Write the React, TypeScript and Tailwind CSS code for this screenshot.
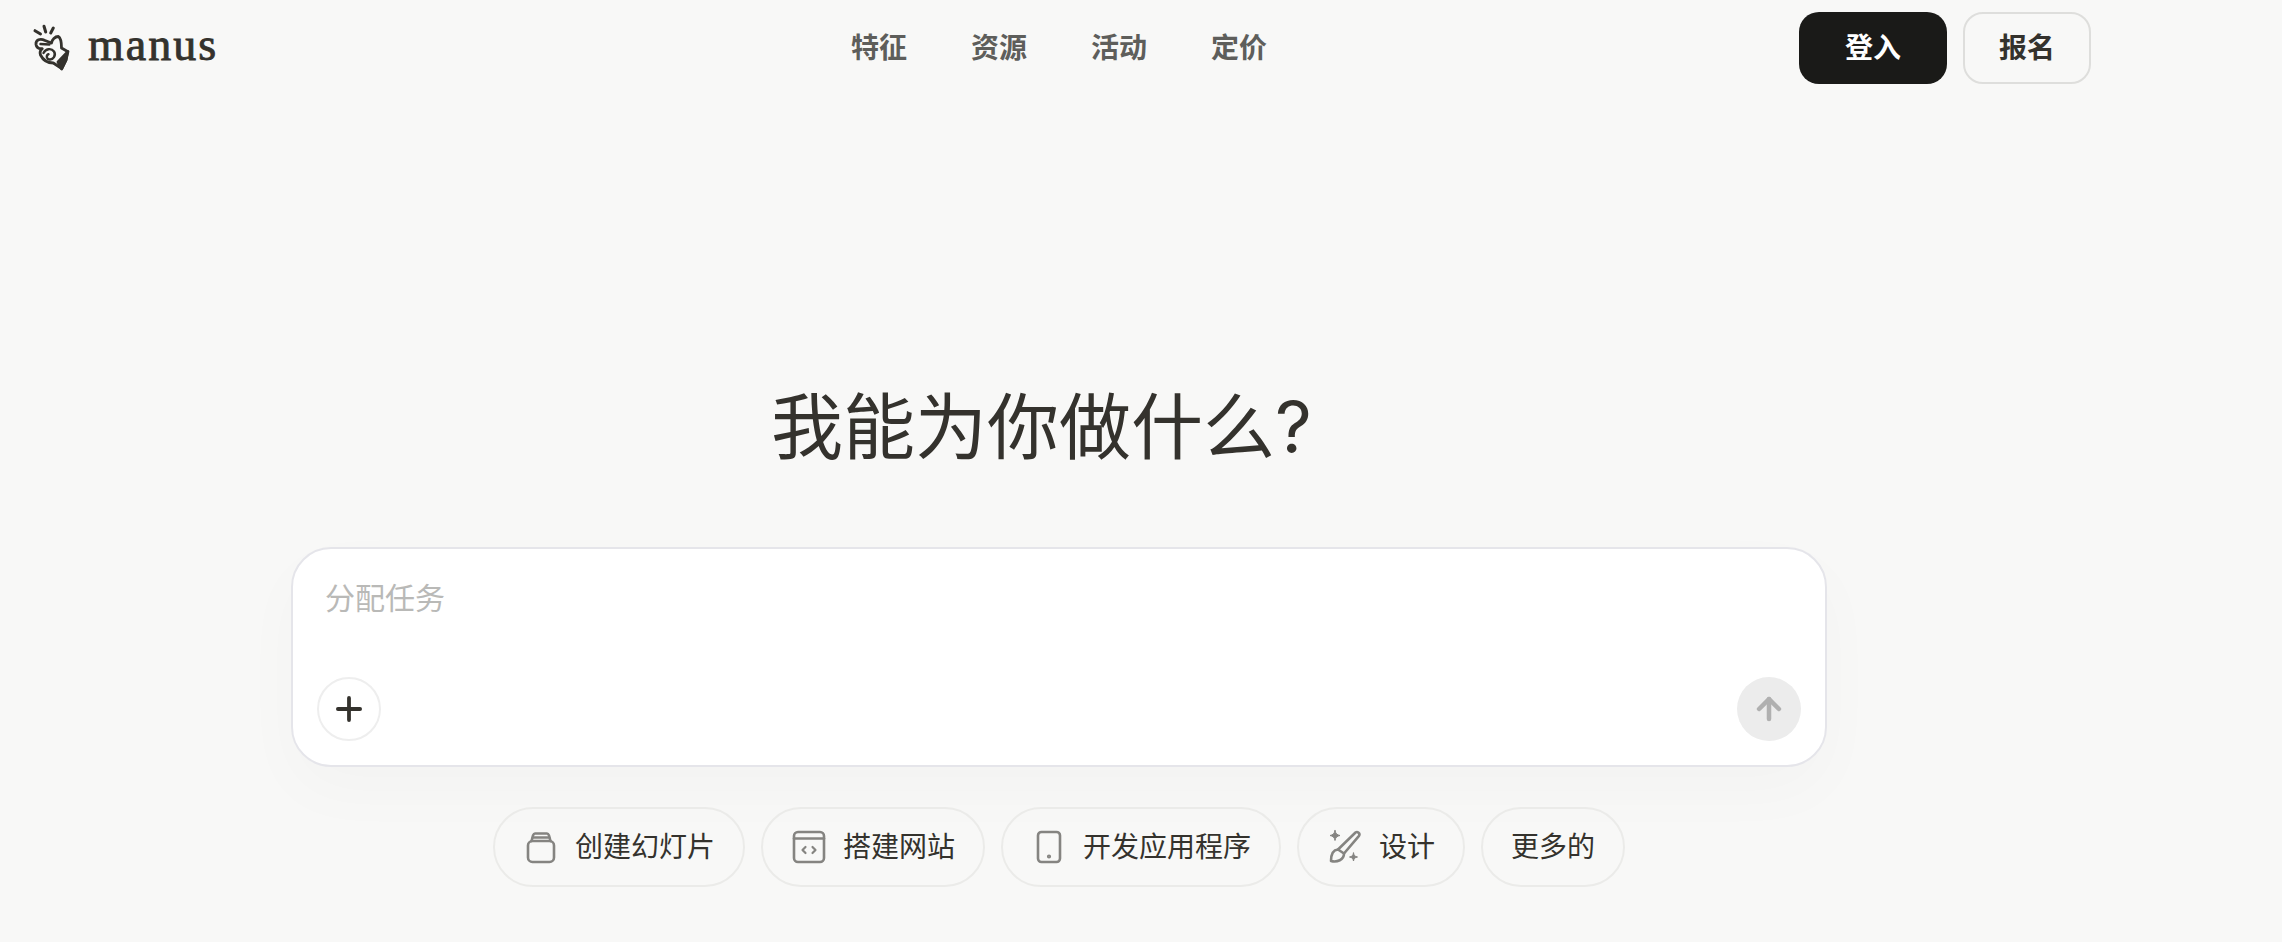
import { ArrowUp, Plus } from "lucide-react"
import type { ReactNode } from "react"

const navItems = ["特征", "资源", "活动", "定价"]

function ManusLogo() {
  return (
    <svg width="40" height="50" viewBox="30 22 40 50" fill="none" stroke="#34322d" strokeWidth="2.800" strokeLinecap="round" strokeLinejoin="round">
      <path d="M35 30.700L40.500 34" strokeWidth="3" />
      <path d="M44 26.300L45.700 32" strokeWidth="3" />
      <path d="M53.300 28L50.700 33" strokeWidth="3" />
      <path d="M36 44.500C35.500 40 40 37.800 45 40.500L51.500 43C52 39.500 55 36.500 58.300 36.500C61 38 61.500 43 61.500 48L67.500 51.500L66 60L61.700 68.500L53.300 63C48 63 43 60 40.500 55C39.500 52 40.500 50 42.300 48.700C39 49 36.500 47.500 36 44.500Z" />
      <path d="M43.500 53C45.500 49 51 47.500 54 51.500C56.500 55.500 53 60 49.500 59.500C46.500 59 45.800 55.500 48.500 54.200" strokeWidth="2.400" />
      <path d="M40.500 44L49.500 44.500" strokeWidth="2.400" />
      <path d="M58 62L68 51.500L66 60L61.700 69Z" fill="#34322d" />
    </svg>
  )
}

function StackIcon() {
  return (
    <svg width="36" height="36" viewBox="0 0 36 36" fill="none" stroke="#858481" strokeWidth="2.600" strokeLinecap="round" strokeLinejoin="round">
      <rect x="5" y="12" width="26" height="21" rx="4.500" />
      <path d="M8.500 12L10 6.500C10.400 5.500 11 4.500 12 4.500H24C25 4.500 25.600 5.500 26 6.500L27.500 12" />
      <path d="M10 8.500H26" />
    </svg>
  )
}

function WebIcon() {
  return (
    <svg width="36" height="36" viewBox="0 0 36 36" fill="none" stroke="#858481" strokeWidth="2.600" strokeLinecap="round" strokeLinejoin="round">
      <rect x="3" y="3" width="30" height="30" rx="4" />
      <path d="M3 9.500H33" />
      <path d="M14.500 18L11.500 21L14.500 24" strokeWidth="2.200" />
      <path d="M21.500 18L24.500 21L21.500 24" strokeWidth="2.200" />
    </svg>
  )
}

function PhoneIcon() {
  return (
    <svg width="36" height="36" viewBox="0 0 36 36" fill="none" stroke="#858481" strokeWidth="2.600" strokeLinecap="round" strokeLinejoin="round">
      <rect x="7" y="3" width="22" height="30" rx="3.500" />
      <circle cx="18" cy="27.500" r="0.800" fill="#858481" />
    </svg>
  )
}

function BrushIcon() {
  return (
    <svg width="36" height="36" viewBox="0 0 36 36" fill="none" stroke="#858481" strokeWidth="2.600" strokeLinecap="round" strokeLinejoin="round">
      <path d="M11 20.500L28.500 3.500C30.500 2 33.500 4.500 32 6.800L17 24.500" />
      <path d="M11 20.500C6 21 4 25 4 32C10 33.500 17 31 17 24.500Z" />
      <path d="M8 1.500C8.500 4.500 10 6 13 6.500C10 7 8.500 8.500 8 11.500C7.500 8.500 6 7 3 6.500C6 6 7.500 4.500 8 1.500Z" fill="#858481" strokeWidth="1" />
      <path d="M26.500 24C27 26.500 27.800 27.500 30.500 28C27.800 28.500 27 29.500 26.500 32C26 29.500 25.200 28.500 22.500 28C25.200 27.500 26 26.500 26.500 24Z" fill="#858481" strokeWidth="1" />
    </svg>
  )
}

function Chip({ icon, label }: { icon?: ReactNode; label: string }) {
  return (
    <button className="flex h-[80px] items-center gap-4 rounded-full border-2 border-[#ebebe9] px-[28px] text-[28px] text-[#34322d]">
      {icon}
      <span>{label}</span>
    </button>
  )
}

export default function App() {
  return (
    <div className="h-[942px] overflow-hidden bg-[#f8f8f7] font-['Inter','Noto_Sans_CJK_SC',sans-serif]">
      {/* Header */}
      <header className="flex items-start pl-[30px]">
        <div className="flex w-[821px] items-center gap-[18px] pt-[22px]">
          <ManusLogo />
          <span className="pb-[4px] font-['Liberation_Serif',serif] text-[46px] leading-[46px] tracking-[2px] text-[#34322d] [-webkit-text-stroke:0.9px_#34322d]">manus</span>
        </div>
        <nav className="flex w-[948px] gap-[64px] pt-[24px] text-[28px] leading-[48px] font-semibold text-[#5e5e5b]">
          {navItems.map((item) => (
            <a key={item}>{item}</a>
          ))}
        </nav>
        <div className="flex gap-4 pt-[12px] text-[28px] font-semibold">
          <button className="h-[72px] w-[148px] rounded-[20px] bg-[#1a1a18] text-white">登入</button>
          <button className="h-[72px] w-[128px] rounded-[20px] border-2 border-[#dededc] text-[#34322d]">报名</button>
        </div>
      </header>

      {/* Title */}
      <h1 className="mt-[298px] ml-[771px] text-[72px] leading-[90px] font-normal text-[#34322d]">我能为你做什么?</h1>

      {/* Input */}
      <div className="mt-[75px] ml-[291px] flex h-[220px] w-[1536px] flex-col justify-between rounded-[40px] border-2 border-[#e5e5ea] bg-white pt-[31px] pr-[24px] pb-[24px] pl-[24px] shadow-[0_24px_64px_rgba(0,0,0,0.025)]">
        <div className="pl-[8px] text-[30px] leading-[36px] text-[#b9b9b7]">分配任务</div>
        <div className="flex items-center justify-between">
          <button className="flex h-[64px] w-[64px] items-center justify-center rounded-full border-2 border-[#eeeeee] text-[#34322d]">
            <Plus size={38} strokeWidth={2.400} />
          </button>
          <button className="flex h-[64px] w-[64px] items-center justify-center rounded-full bg-[#ececec] text-[#b0b0b0]">
            <ArrowUp size={34} strokeWidth={3.200} />
          </button>
        </div>
      </div>

      {/* Quick actions */}
      <div className="mt-[40px] ml-[493px] flex gap-4">
        <Chip icon={<StackIcon />} label="创建幻灯片" />
        <Chip icon={<WebIcon />} label="搭建网站" />
        <Chip icon={<PhoneIcon />} label="开发应用程序" />
        <Chip icon={<BrushIcon />} label="设计" />
        <Chip label="更多的" />
      </div>
    </div>
  )
}
